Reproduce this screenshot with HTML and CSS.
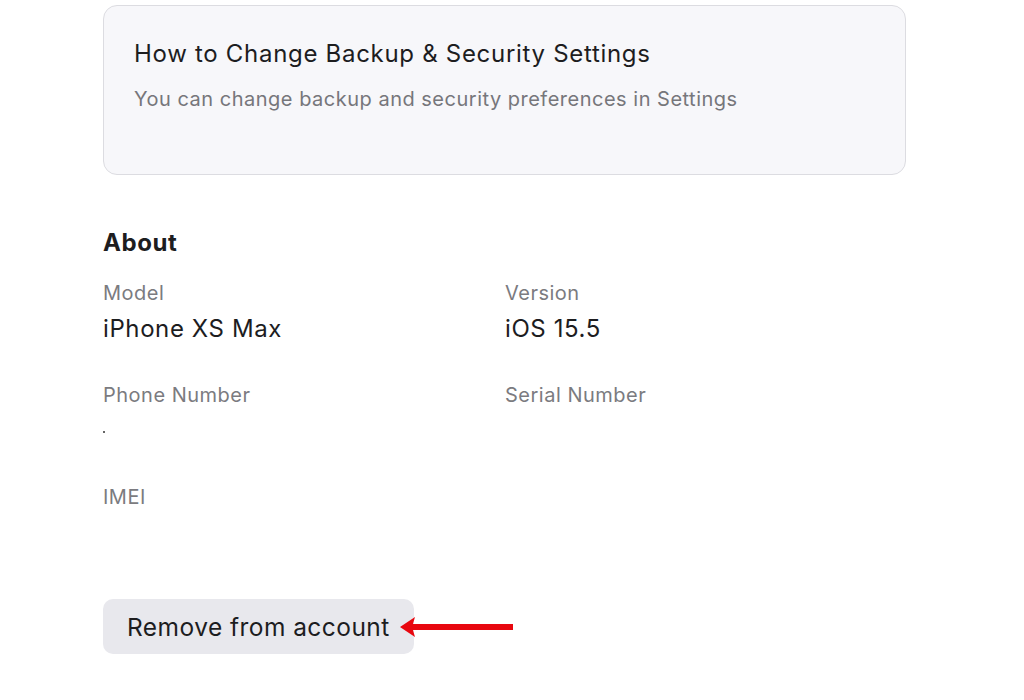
FILE: index.html
```html
<!DOCTYPE html>
<html lang="en">
<head>
    <meta charset="UTF-8">
    <title>Device</title>
    <link rel="stylesheet" href="styles.css">
</head>
<body>
    <div class="page">
        <div class="info-card">
            <h2 class="info-title">How to Change Backup &amp; Security Settings</h2>
            <p class="info-text">You can change backup and security preferences in Settings</p>
        </div>

        <h3 class="section-title">About</h3>
        <div class="about-grid">
            <div class="field">
                <div class="field-label">Model</div>
                <div class="field-value">iPhone XS Max</div>
            </div>
            <div class="field">
                <div class="field-label">Version</div>
                <div class="field-value">iOS 15.5</div>
            </div>
            <div class="field">
                <div class="field-label">Phone Number</div>
                <div class="field-value"><span class="dot"></span></div>
            </div>
            <div class="field">
                <div class="field-label">Serial Number</div>
                <div class="field-value"></div>
            </div>
            <div class="field">
                <div class="field-label">IMEI</div>
                <div class="field-value"></div>
            </div>
        </div>

        <div class="actions">
            <button class="remove-btn">Remove from account</button>
            <svg class="arrow" width="113" height="24" viewBox="0 0 113 24">
                <line x1="12" y1="12" x2="113" y2="12" stroke="#e8070f" stroke-width="6"/>
                <polygon points="0,12 15,2 12,12 15,22" fill="#e8070f"/>
            </svg>
        </div>
    </div>
</body>
</html>
```

FILE: styles.css
```css
* {
    margin: 0;
    padding: 0;
    box-sizing: border-box;
}

body {
    background: #fff;
    font-family: 'Inter', 'Liberation Sans', sans-serif;
    color: #1d1d1f;
}

.page {
    width: 803px;
    margin-left: 103px;
    padding-top: 5px;
}

.info-card {
    background: #f7f7fa;
    border: 1px solid #dcdce1;
    border-radius: 14px;
    height: 170px;
    padding: 33px 30px;
}

.info-title {
    font-size: 24px;
    font-weight: 400;
    color: #1d1d1f;
    line-height: 30px;
    letter-spacing: 0.7px;
}

.info-text {
    font-size: 20px;
    color: #76767b;
    margin-top: 17px;
    line-height: 26px;
    letter-spacing: 0.5px;
}

.section-title {
    font-size: 24px;
    font-weight: 700;
    margin-top: 54px;
    line-height: 28px;
    letter-spacing: 0.6px;
}

.about-grid {
    display: grid;
    grid-template-columns: 402px 1fr;
    row-gap: 26px;
    margin-top: 23px;
}

.field {
    min-height: 76px;
}

.field-label {
    font-size: 20px;
    color: #7b7b80;
    line-height: 26px;
    letter-spacing: 0.5px;
}

.field-value {
    font-size: 24px;
    line-height: 30px;
    margin-top: 8px;
    height: 30px;
    letter-spacing: 0.6px;
}

.dot {
    display: inline-block;
    width: 2px;
    height: 2px;
    background: #666;
    vertical-align: middle;
}

.actions {
    display: flex;
    align-items: center;
    margin-top: 39px;
}

.remove-btn {
    background: #e8e8ed;
    border: none;
    border-radius: 10px;
    font-family: inherit;
    font-size: 24.5px;
    letter-spacing: 0.45px;
    color: #1d1d1f;
    padding: 0 24px;
    height: 55px;
}

.arrow {
    margin-left: -14px;
}
```
